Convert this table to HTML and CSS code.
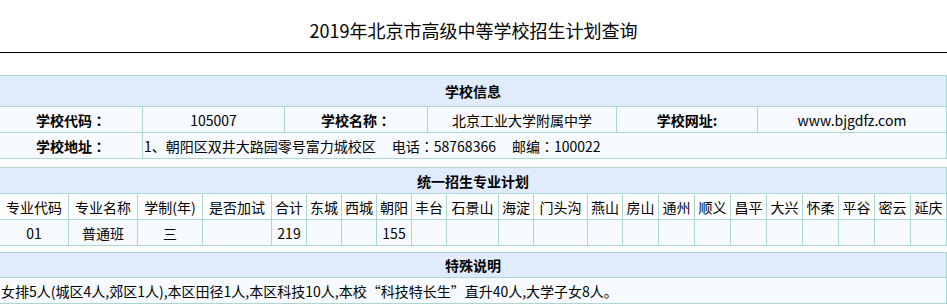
FILE: index.html
```html
<!DOCTYPE html>
<html lang="zh-CN">
<head>
<meta charset="utf-8">
<title>2019年北京市高级中等学校招生计划查询</title>
<link rel="stylesheet" href="styles.css">
</head>
<body>
<header class="page-title">
  <h1>2019年北京市高级中等学校招生计划查询</h1>
</header>
<main class="content">
  <section class="grid info">
    <div class="cell head">学校信息</div>
    <div class="cell label">学校代码<span class="colon">：</span></div>
    <div class="cell">105007</div>
    <div class="cell label">学校名称<span class="colon">：</span></div>
    <div class="cell">北京工业大学附属中学</div>
    <div class="cell label">学校网址:</div>
    <div class="cell">www.bjgdfz.com</div>
    <div class="cell label">学校地址<span class="colon">：</span></div>
    <div class="cell left span-rest">1、朝阳区双井大路园零号富力城校区<span class="sep"></span>电话<span class="colon">：</span>58768366<span class="sep"></span>邮编<span class="colon">：</span>100022</div>
  </section>

  <section class="grid plan">
    <div class="cell head">统一招生专业计划</div>
    <div class="cell sub">专业代码</div>
    <div class="cell sub">专业名称</div>
    <div class="cell sub">学制(年)</div>
    <div class="cell sub">是否加试</div>
    <div class="cell sub">合计</div>
    <div class="cell sub">东城</div>
    <div class="cell sub">西城</div>
    <div class="cell sub">朝阳</div>
    <div class="cell sub">丰台</div>
    <div class="cell sub">石景山</div>
    <div class="cell sub">海淀</div>
    <div class="cell sub">门头沟</div>
    <div class="cell sub">燕山</div>
    <div class="cell sub">房山</div>
    <div class="cell sub">通州</div>
    <div class="cell sub">顺义</div>
    <div class="cell sub">昌平</div>
    <div class="cell sub">大兴</div>
    <div class="cell sub">怀柔</div>
    <div class="cell sub">平谷</div>
    <div class="cell sub">密云</div>
    <div class="cell sub">延庆</div>

    <div class="cell">01</div>
    <div class="cell">普通班</div>
    <div class="cell">三</div>
    <div class="cell"></div>
    <div class="cell">219</div>
    <div class="cell"></div>
    <div class="cell"></div>
    <div class="cell">155</div>
    <div class="cell"></div>
    <div class="cell"></div>
    <div class="cell"></div>
    <div class="cell"></div>
    <div class="cell"></div>
    <div class="cell"></div>
    <div class="cell"></div>
    <div class="cell"></div>
    <div class="cell"></div>
    <div class="cell"></div>
    <div class="cell"></div>
    <div class="cell"></div>
    <div class="cell"></div>
    <div class="cell"></div>
  </section>

  <section class="grid note">
    <div class="cell head">特殊说明</div>
    <div class="cell left">女排5人(城区4人,郊区1人),本区田径1人,本区科技10人,本校“科技特长生”直升40人,大学子女8人。</div>
  </section>
</main>
</body>
</html>
```

FILE: styles.css
```css
* {
  box-sizing: border-box;
}

html, body {
  margin: 0;
  padding: 0;
  background: #ffffff;
  overflow: hidden;
}

body {
  font-family: "Noto Sans CJK SC", "Microsoft YaHei", sans-serif;
  color: #000000;
}

.page-title {
  height: 53px;
  padding-top: 8px;
  border-bottom: 1px solid #000000;
  display: flex;
  align-items: center;
  justify-content: center;
}

.page-title h1 {
  margin: 0;
  font-size: 18px;
  font-weight: normal;
  line-height: 24px;
}

.content {
  width: 948px;
  margin-left: -1px;
  padding-top: 22px;
}

.grid {
  display: grid;
  border-top: 1px solid #abd7d0;
  border-left: 1px solid #abd7d0;
}

.cell {
  height: 26px;
  border-right: 1px solid #abd7d0;
  border-bottom: 1px solid #abd7d0;
  background: #f7fbff;
  display: flex;
  align-items: center;
  justify-content: center;
  font-size: 14px;
  line-height: 20px;
  white-space: pre;
  overflow: hidden;
}

.colon {
  font-family: "Noto Sans CJK JP", "Noto Sans CJK SC", sans-serif;
}

.head {
  grid-column: 1 / -1;
  background: #e0ecfb;
  font-weight: bold;
}

.label {
  font-weight: bold;
}

.sub {
  background: #ffffff;
}

.left {
  justify-content: flex-start;
  padding-left: 1px;
}

.span-rest {
  grid-column: 2 / -1;
}

.sep {
  display: inline-block;
  width: 16px;
}

.info {
  grid-template-columns: 143px 142px 143px 189px 141px 189px;
}

.info .head {
  height: 31px;
}

.plan {
  margin-top: 8px;
  grid-template-columns: 69px 69px 65px 69px 35px 35px 35px 35px 35px 52px 35px 54px 35px repeat(9, 36px);
}

.note {
  margin-top: 6px;
  grid-template-columns: 1fr;
}

.note .head {
  height: 25px;
}
```
